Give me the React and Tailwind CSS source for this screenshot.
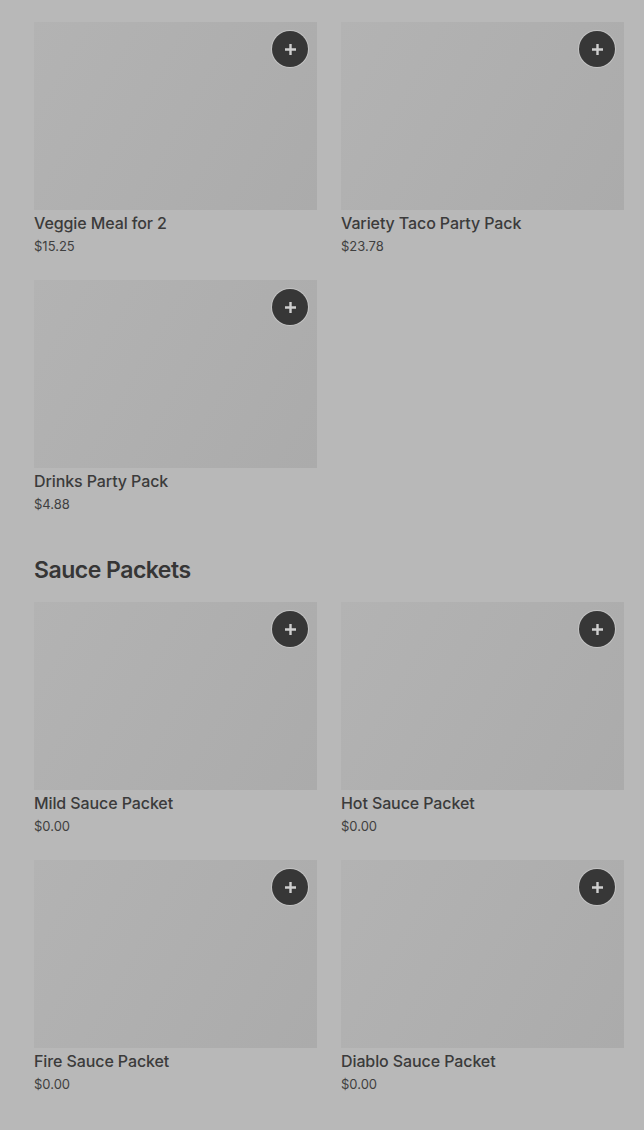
import React from "react";

const PlusBtn = () => (
  <div className="absolute right-[9px] top-[9px] w-9 h-9 rounded-full bg-[#373737] ring-1 ring-[#c4c4c4] flex items-center justify-center">
    <svg width="13" height="13" viewBox="0 0 13 13">
      <path d="M6.5 1v11M1 6.5h11" stroke="#cfcfcf" strokeWidth="2.4" />
    </svg>
  </div>
);

const Card = ({ title, price }) => (
  <div className="flex flex-col">
    <div className="relative h-[188px] bg-[linear-gradient(120deg,#b3b3b3_0%,#afafaf_50%,#ababab_100%)]">
      <PlusBtn />
    </div>
    <div className="mt-[1px] h-6 leading-6 text-[16px] font-medium tracking-[-0.1px] text-[#3b3b3b]">{title}</div>
    <div className="mt-[1px] h-5 leading-5 text-[13px] text-[#3f3f3f]">{price}</div>
  </div>
);

export default function App() {
  return (
    <div
      className="min-h-[1130px] w-[644px] bg-[#b8b8b8] pl-[34px] pr-5 pt-[22px]"
      style={{ fontFamily: "Inter, 'Noto Sans', sans-serif" }}
    >
      <div className="grid grid-cols-[283px_283px] gap-x-6 gap-y-6">
        <Card title="Veggie Meal for 2" price="$15.25" />
        <Card title="Variety Taco Party Pack" price="$23.78" />
        <Card title="Drinks Party Pack" price="$4.88" />
      </div>
      <h2 className="mt-[40px] h-8 leading-8 text-[23px] font-semibold tracking-[-0.5px] text-[#363636]">
        Sauce Packets
      </h2>
      <div className="mt-4 grid grid-cols-[283px_283px] gap-x-6 gap-y-6">
        <Card title="Mild Sauce Packet" price="$0.00" />
        <Card title="Hot Sauce Packet" price="$0.00" />
        <Card title="Fire Sauce Packet" price="$0.00" />
        <Card title="Diablo Sauce Packet" price="$0.00" />
      </div>
    </div>
  );
}
